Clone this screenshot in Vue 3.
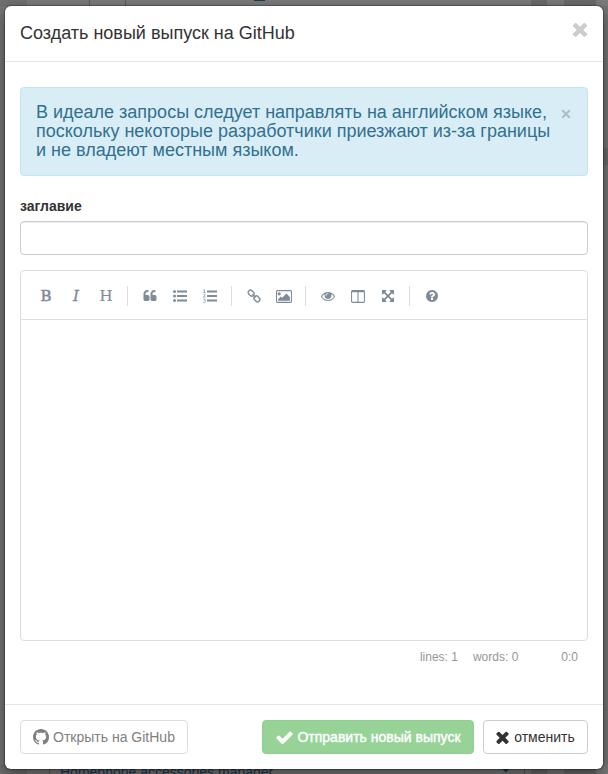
<script setup>
const times = 'M1490 1322q0 40-28 68l-136 136q-28 28-68 28t-68-28l-294-294-294 294q-28 28-68 28t-68-28l-136-136q-28-28-28-68t28-68l294-294-294-294q-28-28-28-68t28-68l136-136q28-28 68-28t68 28l294 294 294-294q28-28 68-28t68 28l136 136q28 28 28 68t-28 68l-294 294 294 294q28 28 28 68z'
const quote = 'M832 960v384q0 80-56 136t-136 56h-384q-80 0-136-56t-56-136v-704q0-104 40.500-198.500t109.500-163.500 163.500-109.500 198.500-40.500h64q26 0 45 19t19 45v128q0 26-19 45t-45 19h-64q-106 0-181 75t-75 181v32q0 40 28 68t68 28h224q80 0 136 56t56 136z'
const image = 'M576 576q0 80-56 136t-136 56-136-56-56-136 56-136 136-56 136 56 56 136zm1088 384v448h-1408v-192l320-320 160 160 512-512zm96-704h-1600q-13 0-22.500 9.500t-9.500 22.500v1216q0 13 9.500 22.500t22.500 9.500h1600q13 0 22.500-9.500t9.500-22.500v-1216q0-13-9.500-22.500t-22.500-9.500zm160 32v1216q0 66-47 113t-113 47h-1600q-66 0-113-47t-47-113v-1216q0-66 47-113t113-47h1600q66 0 113 47t47 113z'
const eye = 'M1664 960q-152-236-381-353 61 104 61 225 0 185-131.500 316.500t-316.500 131.500-316.500-131.500-131.500-316.500q0-121 61-225-229 117-381 353 133 205 333.500 326.500t434.500 121.500 434.500-121.500 333.500-326.500zm-720-384q0-20-14-34t-34-14q-125 0-214.500 89.500t-89.500 214.500q0 20 14 34t34 14 34-14 14-34q0-86 61-147t147-61q20 0 34-14t14-34zm848 384q0 34-20 69-140 230-376.500 368.500t-499.500 138.500-499.500-139-376.500-368q-20-35-20-69t20-69q140-229 376.500-368t499.500-139 499.500 139 376.500 368q20 35 20 69z'
const columns = 'M160 1536h608v-1152h-640v1120q0 13 9.500 22.500t22.500 9.500zm1376-32v-1120h-640v1152h608q13 0 22.500-9.500t9.500-22.500zm128-1216v1216q0 66-47 113t-113 47h-1344q-66 0-113-47t-47-113v-1216q0-66 47-113t113-47h1344q66 0 113 47t47 113z'
const arrows = 'M1411 541l-355 355 355 355 144-144q29-31 70-14 39 17 39 59v448q0 26-19 45t-45 19h-448q-42 0-59-40-17-39 14-69l144-144-355-355-355 355 144 144q31 30 14 69-17 40-59 40h-448q-26 0-45-19t-19-45v-448q0-42 40-59 39-17 69 14l144 144 355-355-355-355-144 144q-19 19-45 19-12 0-24-5-40-17-40-59v-448q0-26 19-45t45-19h448q42 0 59 40 17 39-14 69l-144 144 355 355 355-355-144-144q-31-30-14-69 17-40 59-40h448q26 0 45 19t19 45v448q0 42-39 59-13 5-25 5-26 0-45-19z'
const question = 'M1024 1376v-192q0-14-9-23t-23-9h-192q-14 0-23 9t-9 23v192q0 14 9 23t23 9h192q14 0 23-9t9-23zm256-672q0-88-55.500-163t-138.500-116-170-41q-243 0-371 213-15 24 8 42l132 100q7 6 19 6 16 0 25-12 53-68 86-92 34-24 86-24 48 0 85.500 26t37.500 59q0 38-20 61t-68 45q-63 28-115.500 86.500t-52.500 125.500v36q0 14 9 23t23 9h192q14 0 23-9t9-23q0-19 21.500-49.500t54.500-49.500q32-18 49-28.500t46-35 44.500-48 28-60.500 12.500-81zm384 192q0 209-103 385.500t-279.500 279.500-385.500 103-385.500-103-279.500-279.500-103-385.500 103-385.500 279.500-279.500 385.500-103 385.500 103 279.500 279.500 103 385.500z'
const check = 'M1671 566q0 40-28 68l-724 724-136 136q-28 28-68 28t-68-28l-136-136-362-362q-28-28-28-68t28-68l136-136q28-28 68-28t68 28l294 295 656-657q28-28 68-28t68 28l136 136q28 28 28 68z'
const github = 'M8 0C3.58 0 0 3.58 0 8c0 3.54 2.29 6.53 5.47 7.59.4.07.55-.17.55-.38 0-.19-.01-.82-.01-1.49-2.01.37-2.53-.49-2.69-.94-.09-.23-.48-.94-.82-1.13-.28-.15-.68-.52-.01-.53.63-.01 1.08.58 1.23.82.72 1.21 1.87.87 2.33.66.07-.52.28-.87.51-1.07-1.78-.2-3.64-.89-3.64-3.95 0-.87.31-1.59.82-2.15-.08-.2-.36-1.02.08-2.12 0 0 .67-.21 2.2.82.64-.18 1.32-.27 2-.27.68 0 1.36.09 2 .27 1.53-1.04 2.2-.82 2.2-.82.44 1.1.16 1.92.08 2.12.51.56.82 1.27.82 2.15 0 3.07-1.87 3.75-3.65 3.95.29.25.54.73.54 1.48 0 1.07-.01 1.93-.01 2.2 0 .21.15.46.55.38A8.013 8.013 0 0016 8c0-4.420-3.580-8-8-8z'
</script>

<template>
  <div class="page">
    <div class="behind top">
      <span class="vline l1"></span><span class="vline l2"></span><span class="chip"></span>
      <span class="tile t1"></span><span class="tile t2"></span>
    </div>
    <div class="behind stripe"></div>
    <div class="behind bottom">
      <span class="bg-link">Homephone accessories manager</span>
      <svg class="bg-check" viewBox="0 0 1792 1792"><path :d="check" /></svg>
      <span class="vline l3"></span><span class="vline l4"></span>
      <span class="tile t1"></span><span class="tile t2"></span>
    </div>
    <section class="modal">
      <header class="head">
        <h4 class="title">Создать новый выпуск на GitHub</h4>
        <button class="x big"><svg viewBox="302 302 1188 1252"><path :d="times" /></svg></button>
      </header>
      <main class="body">
        <div class="alert">
          <p>В идеале запросы следует направлять на английском языке,<br />поскольку некоторые разработчики приезжают из-за границы<br />и не владеют местным языком.</p>
          <button class="x small"><svg viewBox="0 0 10 10"><path d="M1.200 1.200l7.600 7.600M8.800 1.200l-7.600 7.600" /></svg></button>
        </div>
        <label class="label" for="title">заглавие</label>
        <input id="title" class="input" type="text" />
        <div class="editor">
          <div class="toolbar">
            <button class="tool b">B</button>
            <button class="tool i">I</button>
            <button class="tool h">H</button>
            <i class="sep"></i>
            <button class="tool"><svg width="14" height="14" viewBox="0 0 1792 1792"><path :d="quote" /><path :d="quote" transform="translate(896 0)" /></svg></button>
            <button class="tool"><svg width="14" height="14" viewBox="0 0 14 14"><circle cx="1.500" cy="2.500" r="1.500" /><circle cx="1.500" cy="7" r="1.500" /><circle cx="1.500" cy="11.500" r="1.500" /><path d="M4 1.500h10v2H4zM4 6h10v2H4zM4 10.500h10v2H4z" /></svg></button>
            <button class="tool"><svg width="14" height="14" viewBox="0 0 14 14"><path d="M4 1.500h10v2H4zM4 6h10v2H4zM4 10.500h10v2H4z" /><path class="thin" d="M.4 1l1-.7v3M.2 3.500h2.400M.4 5.600c.4-.7 1.900-.6 1.900.3 0 .8-1.800 1.100-1.800 2.200h2.100M.4 10.200h1.900l-1 1.100c1.500.1 1.500 2.200 0 2.200-.5 0-.9-.2-1.200-.5" /></svg></button>
            <i class="sep"></i>
            <button class="tool"><svg width="14" height="14" viewBox="0 0 14 14"><g class="link" transform="rotate(45 7 7)"><rect x="-.2" y="4.700" width="6.200" height="4.600" rx="2.100" /><rect x="8" y="4.700" width="6.200" height="4.600" rx="2.100" /><path d="M4.800 7h4.400" /></g></svg></button>
            <button class="tool"><svg width="16" height="15" viewBox="0 0 1920 1792"><path :d="image" /></svg></button>
            <i class="sep"></i>
            <button class="tool"><svg width="14" height="14" viewBox="0 0 1792 1792"><path :d="eye" /></svg></button>
            <button class="tool"><svg width="14" height="15" viewBox="0 0 1664 1792"><path :d="columns" /></svg></button>
            <button class="tool"><svg width="14" height="14" viewBox="0 0 1792 1792"><path :d="arrows" /></svg></button>
            <i class="sep"></i>
            <button class="tool"><svg width="14" height="14" viewBox="0 0 1792 1792"><path :d="question" /></svg></button>
          </div>
          <div class="area"></div>
        </div>
        <div class="status"><span class="lines">lines: 1</span><span class="words">words: 0</span><span>0:0</span></div>
      </main>
      <footer class="foot">
        <button class="btn gh"><svg width="16" height="16" viewBox="0 0 16 16"><path :d="github" /></svg><span>Открыть на GitHub</span></button>
        <button class="btn send"><svg width="19" height="19" viewBox="0 0 1792 1792"><path :d="check" /></svg><span>Отправить новый выпуск</span></button>
        <button class="btn cancel"><svg width="13" height="13" viewBox="302 302 1188 1252"><path :d="times" /></svg><span>отменить</span></button>
      </footer>
    </section>
  </div>
</template>

<style>
body { margin: 0; }
</style>
<style scoped>
* { box-sizing: border-box; }
.page { position: relative; width: 608px; height: 774px; padding: 6px 5px 5px; overflow: hidden; background: #777; font-family: "Liberation Sans", Arial, sans-serif; font-size: 14px; color: #333; }
button { font: inherit; padding: 0; margin: 0; border: 0; background: none; }
svg { display: block; fill: currentColor; flex: none; }
.behind { position: absolute; left: 0; width: 608px; }
.top { top: 0; height: 6px; background: linear-gradient(90deg, #707070 27px, #7b7b7b 27px); }
.top span { position: absolute; top: 0; height: 6px; }
.vline { width: 1px; background: #5c5c5c; }
.l1 { left: 89px; } .l2 { left: 125px; }
.top .chip { left: 254px; width: 11px; height: 1px; background: #173f54; }
.tile { background: #6b6b6b; }
.t1 { left: 531px; width: 16px; } .t2 { left: 564px; width: 32px; }
.stripe { top: 148px; height: 17px; background: linear-gradient(90deg, transparent 50%, #6b6b6b 50%); }
.bottom { bottom: 0; height: 10px; overflow: hidden; background: linear-gradient(90deg, #707070 27px, #7b7b7b 27px); }
.bottom .vline, .bottom .tile { position: absolute; top: 0; height: 10px; }
.l3 { left: 49px; } .l4 { left: 524px; }
.bg-link { position: absolute; left: 60px; top: 0; color: #173a54; font-size: 14px; line-height: 16px; white-space: nowrap; }
.bg-check { position: absolute; left: 501px; top: -2px; width: 12px; height: 12px; color: #173a54; }
.modal { position: relative; width: 598px; height: 763px; display: flex; flex-direction: column; background: #fff; border-radius: 6px; box-shadow: 0 0 0 1px rgba(0,0,0,.25), 0 5px 15px rgba(0,0,0,.5); }
.head { display: flex; justify-content: space-between; height: 56px; padding: 15px; border-bottom: 1px solid #e5e5e5; }
.title { margin: 2px 0 0; font-weight: 400; font-size: 18px; line-height: 20px; white-space: nowrap; }
.x svg { width: 100%; height: 100%; }
.big { width: 14px; height: 15px; margin: 1px 1px 0 0; color: #ccc; }
.body { padding: 25px 15px 0; flex: 1; }
.alert { display: flex; justify-content: space-between; height: 89px; padding: 15px; border: 1px solid #bce8f1; border-radius: 4px; background: #d9edf7; color: #31708f; }
.alert p { margin: 0; font-size: 18px; line-height: 19px; white-space: nowrap; }
.small { width: 10px; height: 10px; margin: 6px 1px 0 0; color: #adbec6; }
.small path { stroke: currentColor; stroke-width: 2.200; }
.label { display: block; margin-top: 22px; height: 16px; line-height: 16px; font-weight: 700; }
.input { display: block; width: 100%; height: 34px; margin-top: 7px; border: 1px solid #ccc; border-radius: 4px; box-shadow: inset 0 1px 1px rgba(0,0,0,.075); background: #fff; }
.editor { margin-top: 15px; height: 371px; border: 1px solid #ddd; border-radius: 4px; display: flex; flex-direction: column; }
.toolbar { height: 49px; padding: 2px 10px 0; display: flex; align-items: center; border-bottom: 1px solid #ddd; }
.area { flex: 1; }
.tool { width: 30px; height: 30px; display: flex; align-items: center; justify-content: center; color: #7f8c98; font-family: "DejaVu Serif", serif; font-size: 15px; }
.tool.b { -webkit-text-stroke: .6px currentColor; }
.tool.i { font-style: italic; -webkit-text-stroke: .4px currentColor; }
.tool.h { -webkit-text-stroke: .2px currentColor; }
.sep { width: 1px; height: 20px; margin: 0 7px 0 6px; background: #ddd; }
.thin { fill: none; stroke: currentColor; stroke-width: .7; }
.link { fill: none; stroke: currentColor; stroke-width: 1.400; }
.status { display: flex; justify-content: flex-end; height: 32px; padding: 9px 10px 0 0; font-size: 12px; line-height: 14px; color: #959694; }
.lines { margin-right: 15px; }
.words { margin-right: 43px; }
.foot { display: flex; height: 65px; padding: 15px; border-top: 1px solid #e5e5e5; }
.btn { height: 34px; display: flex; align-items: center; justify-content: center; border: 1px solid #ccc; border-radius: 4px; white-space: nowrap; }
.gh { width: 168px; gap: 4px; margin-right: auto; border-color: #ddd; color: #808080; }
.send { width: 212px; gap: 3px; margin-right: 9px; border-color: #8ece8e; background: #97d397; color: #fff; }
.send span { -webkit-text-stroke: .4px currentColor; }
.cancel { width: 105px; gap: 5px; color: #333; }
</style>
